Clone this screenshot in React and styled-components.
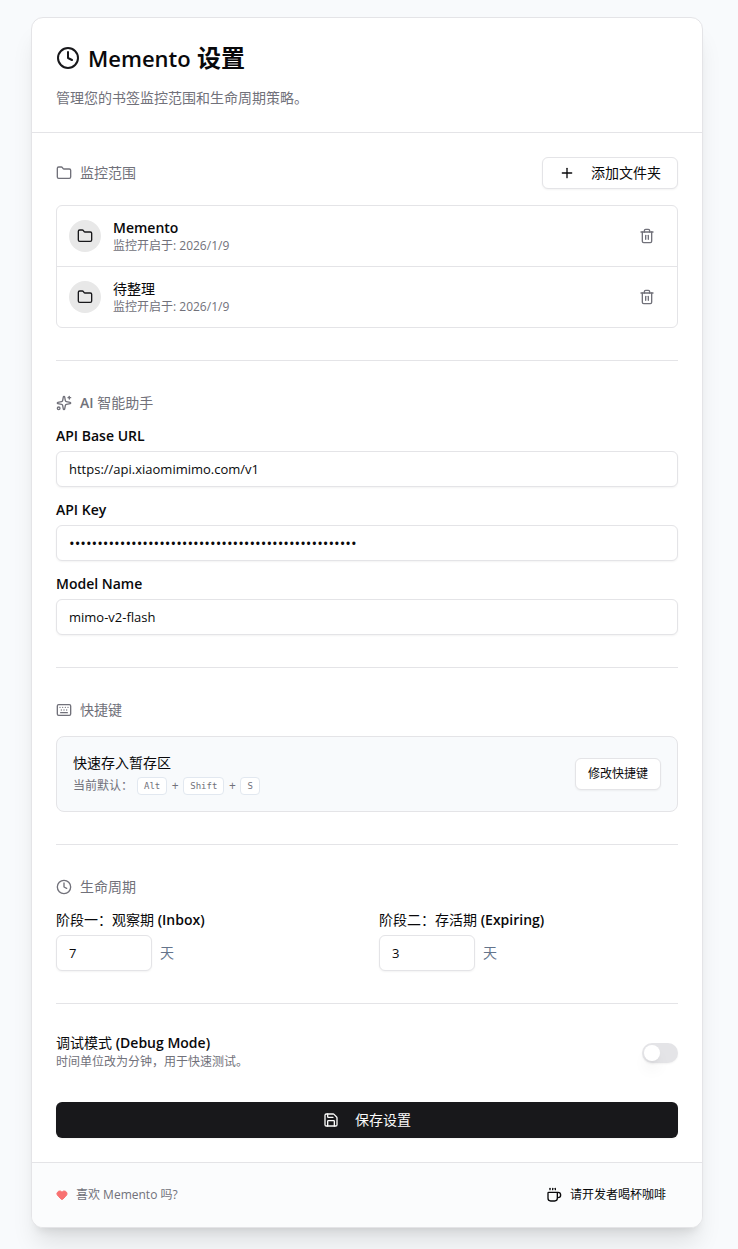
import React, { useState } from 'react';
import styled, { createGlobalStyle } from 'styled-components';
import {
  Clock,
  Coffee,
  Folder,
  Heart,
  Keyboard,
  Plus,
  Save,
  Sparkles,
  Trash2,
} from 'lucide-react';

const GlobalStyle = createGlobalStyle`
  *, *::before, *::after {
    box-sizing: border-box;
  }

  body {
    margin: 0;
    background: #f8fafc;
    color: #09090b;
    font-family: 'Open Sans', 'Noto Sans CJK SC', sans-serif;
    font-size: 14px;
    line-height: 20px;
  }

  h1, h2, p {
    margin: 0;
  }

  button, input {
    font: inherit;
    color: inherit;
  }
`;

const Page = styled.main`
  padding: 17px 35px 21px 31px;
`;

const Card = styled.div`
  max-width: 672px;
  margin: 0 auto;
  background: #fff;
  border: 1px solid #e4e4e7;
  border-radius: 12px;
  box-shadow: 0 20px 25px -5px rgba(0, 0, 0, 0.1),
    0 8px 10px -6px rgba(0, 0, 0, 0.1);
`;

const Header = styled.header`
  display: flex;
  flex-direction: column;
  gap: 14px;
  padding: 24px;
  border-bottom: 1px solid #e4e4e7;
`;

const Title = styled.h1`
  display: flex;
  align-items: center;
  gap: 8px;
  font-size: 24px;
  font-weight: 700;
  line-height: 32px;
`;

const Brand = styled.span`
  font-size: 22px;
  font-weight: 600;
`;

const Muted = styled.p`
  color: #71717a;
  font-size: ${props => (props.$small ? '12px' : '14px')};
  line-height: ${props => (props.$small ? '16px' : '20px')};
`;

const Content = styled.div`
  display: flex;
  flex-direction: column;
  gap: 32px;
  padding: 24px;
`;

const Section = styled.section`
  display: flex;
  flex-direction: column;
  gap: 16px;
`;

const Divider = styled.hr`
  width: 100%;
  height: 1px;
  margin: 0;
  border: 0;
  background: #e4e4e7;
`;

const Between = styled.div`
  display: flex;
  align-items: center;
  justify-content: space-between;
`;

const SectionTitle = styled.h2`
  display: flex;
  align-items: center;
  gap: 8px;
  color: #71717a;
  font-size: 14px;
  font-weight: 400;
  line-height: 20px;
`;

const Button = styled.button`
  display: inline-flex;
  align-items: center;
  justify-content: center;
  gap: 16px;
  height: 32px;
  padding: 0 ${props => (props.$small ? '12px' : '16px')};
  border: 1px solid #e4e4e7;
  border-radius: 6px;
  background: #fff;
  box-shadow: 0 1px 2px rgba(0, 0, 0, 0.05);
  font-size: ${props => (props.$small ? '12px' : '14px')};
  white-space: nowrap;
  cursor: pointer;
`;

const SaveButton = styled(Button)`
  width: 100%;
  height: 36px;
  border: 0;
  background: #18181b;
  color: #fafafa;
`;

const IconButton = styled.button`
  display: flex;
  align-items: center;
  justify-content: center;
  width: 36px;
  height: 32px;
  padding: 0;
  border: 0;
  border-radius: 6px;
  background: transparent;
  color: #71717a;
  cursor: pointer;
`;

const FolderList = styled.ul`
  margin: 0;
  padding: 0;
  border: 1px solid #e4e4e7;
  border-radius: 6px;
  list-style: none;
`;

const FolderRow = styled.li`
  display: flex;
  align-items: center;
  gap: 12px;
  padding: 12px;

  & + & {
    border-top: 1px solid #e4e4e7;
  }
`;

const FolderBadge = styled.span`
  display: flex;
  align-items: center;
  justify-content: center;
  width: 32px;
  height: 32px;
  border-radius: 50%;
  background: #e8e8e8;
  color: #18181b;
`;

const FolderText = styled.div`
  flex: 1;
`;

const Name = styled.p`
  font-weight: ${props => (props.$latin ? 600 : 400)};
`;

const Field = styled.div`
  display: flex;
  flex-direction: column;
  gap: 8px;
`;

const Label = styled.label`
  font-size: 14px;
  line-height: 14px;
`;

const Latin = styled.span`
  font-weight: 600;
`;

const Input = styled.input`
  width: ${props => (props.$short ? '96px' : '100%')};
  height: 36px;
  padding: 0 12px;
  border: 1px solid #e4e4e7;
  border-radius: 6px;
  background: #fff;
  box-shadow: 0 1px 2px rgba(0, 0, 0, 0.05);
  font-size: 13px;
  outline: none;
  appearance: textfield;

  &[type='password'] {
    font-size: 15px;
  }

  &::-webkit-inner-spin-button {
    display: none;
  }

  &:focus-visible {
    border-color: #18181b;
  }
`;

const ShortcutBox = styled(Between)`
  padding: 16px;
  border: 1px solid #e4e4e7;
  border-radius: 8px;
  background: #f8fafc;
`;

const Stack = styled.div`
  display: flex;
  flex-direction: column;
  gap: 4px;
`;

const Keys = styled.div`
  display: flex;
  align-items: center;
  gap: 4px;
  height: 18px;
  color: #71717a;
  font-size: 12px;
`;

const Joiner = styled.span`
  width: 8px;
  text-align: center;
`;

const Kbd = styled.kbd`
  height: 18px;
  padding: 0 6px;
  border: 1px solid #e2e8f0;
  border-radius: 4px;
  background: #fff;
  font-family: 'DejaVu Sans Mono', monospace;
  font-size: 9px;
  line-height: 16px;
`;

const Stages = styled.div`
  display: grid;
  grid-template-columns: 1fr 1fr;
  gap: 24px;
`;

const Days = styled.div`
  display: flex;
  align-items: center;
  gap: 8px;
  color: #64748b;

  input {
    color: #09090b;
  }
`;

const Switch = styled.input`
  display: flex;
  align-items: center;
  width: 36px;
  height: 20px;
  margin: 0;
  padding: 2px;
  border-radius: 10px;
  background: ${props => (props.checked ? '#18181b' : '#e4e4e7')};
  box-shadow: 0 1px 2px rgba(0, 0, 0, 0.05);
  appearance: none;
  cursor: pointer;

  &::before {
    content: '';
    width: 16px;
    height: 16px;
    margin-left: ${props => (props.checked ? '16px' : '0')};
    border-radius: 50%;
    background: #fff;
    box-shadow: 0 10px 15px -3px rgba(0, 0, 0, 0.1),
      0 4px 6px -4px rgba(0, 0, 0, 0.1);
  }
`;

const Footer = styled.footer`
  display: flex;
  align-items: center;
  justify-content: space-between;
  padding: 16px 24px;
  border-top: 1px solid #e4e4e7;
  border-radius: 0 0 11px 11px;
  background: #fbfcfd;
`;

const Like = styled.p`
  display: flex;
  align-items: center;
  gap: 8px;
  color: #71717a;
  font-size: 12px;
`;

const CoffeeLink = styled.a`
  display: flex;
  align-items: center;
  gap: 8px;
  height: 32px;
  padding: 0 12px;
  color: #09090b;
  font-size: 12px;
  text-decoration: none;
`;

const folders = [
  { id: 1, name: 'Memento', since: '2026/1/9', latin: true },
  { id: 2, name: '待整理', since: '2026/1/9' },
];

const shortcut = ['Alt', 'Shift', 'S'];

const StageField = ({ id, label, suffix, value }) => (
  <Field>
    <Label htmlFor={id}>
      {label} <Latin>{suffix}</Latin>
    </Label>
    <Days>
      <Input $short id={id} type="number" defaultValue={value} />
      <span>天</span>
    </Days>
  </Field>
);

export default function App() {
  const [debug, setDebug] = useState(false);

  return (
    <Page>
      <GlobalStyle />
      <Card>
        <Header>
          <Title>
            <Clock size={24} color="#18181b" />
            <span>
              <Brand>Memento</Brand> 设置
            </span>
          </Title>
          <Muted>管理您的书签监控范围和生命周期策略。</Muted>
        </Header>

        <Content>
          <Section>
            <Between>
              <SectionTitle>
                <Folder size={16} />
                监控范围
              </SectionTitle>
              <Button type="button">
                <Plus size={16} />
                添加文件夹
              </Button>
            </Between>
            <FolderList>
              {folders.map(folder => (
                <FolderRow key={folder.id}>
                  <FolderBadge>
                    <Folder size={16} />
                  </FolderBadge>
                  <FolderText>
                    <Name $latin={folder.latin}>{folder.name}</Name>
                    <Muted $small>监控开启于: {folder.since}</Muted>
                  </FolderText>
                  <IconButton type="button" aria-label={`删除 ${folder.name}`}>
                    <Trash2 size={16} />
                  </IconButton>
                </FolderRow>
              ))}
            </FolderList>
          </Section>

          <Divider />

          <Section>
            <SectionTitle>
              <Sparkles size={16} />
              <span>
                <Latin>AI</Latin> 智能助手
              </span>
            </SectionTitle>
            <Field>
              <Label htmlFor="base-url">
                <Latin>API Base URL</Latin>
              </Label>
              <Input
                id="base-url"
                type="text"
                defaultValue="https://api.xiaomimimo.com/v1"
              />
            </Field>
            <Field>
              <Label htmlFor="api-key">
                <Latin>API Key</Latin>
              </Label>
              <Input
                id="api-key"
                type="password"
                defaultValue={'x'.repeat(51)}
              />
            </Field>
            <Field>
              <Label htmlFor="model">
                <Latin>Model Name</Latin>
              </Label>
              <Input id="model" type="text" defaultValue="mimo-v2-flash" />
            </Field>
          </Section>

          <Divider />

          <Section>
            <SectionTitle>
              <Keyboard size={16} />
              快捷键
            </SectionTitle>
            <ShortcutBox>
              <Stack>
                <Name>快速存入暂存区</Name>
                <Keys>
                  <span>当前默认：</span>
                  {shortcut.map((key, i) => (
                    <React.Fragment key={key}>
                      {i > 0 && <Joiner>+</Joiner>}
                      <Kbd>{key}</Kbd>
                    </React.Fragment>
                  ))}
                </Keys>
              </Stack>
              <Button $small type="button">
                修改快捷键
              </Button>
            </ShortcutBox>
          </Section>

          <Divider />

          <Section>
            <SectionTitle>
              <Clock size={16} />
              生命周期
            </SectionTitle>
            <Stages>
              <StageField
                id="inbox"
                label="阶段一：观察期"
                suffix="(Inbox)"
                value={7}
              />
              <StageField
                id="expiring"
                label="阶段二：存活期"
                suffix="(Expiring)"
                value={3}
              />
            </Stages>
          </Section>

          <Divider />

          <Between>
            <Stack>
              <Label htmlFor="debug">
                调试模式 <Latin>(Debug Mode)</Latin>
              </Label>
              <Muted $small>时间单位改为分钟，用于快速测试。</Muted>
            </Stack>
            <Switch
              id="debug"
              type="checkbox"
              role="switch"
              checked={debug}
              onChange={e => setDebug(e.target.checked)}
            />
          </Between>

          <SaveButton type="button">
            <Save size={16} />
            保存设置
          </SaveButton>
        </Content>

        <Footer>
          <Like>
            <Heart size={12} color="#f87171" fill="#f87171" />
            喜欢 Memento 吗?
          </Like>
          <CoffeeLink href="#coffee">
            <Coffee size={16} />
            请开发者喝杯咖啡
          </CoffeeLink>
        </Footer>
      </Card>
    </Page>
  );
}
